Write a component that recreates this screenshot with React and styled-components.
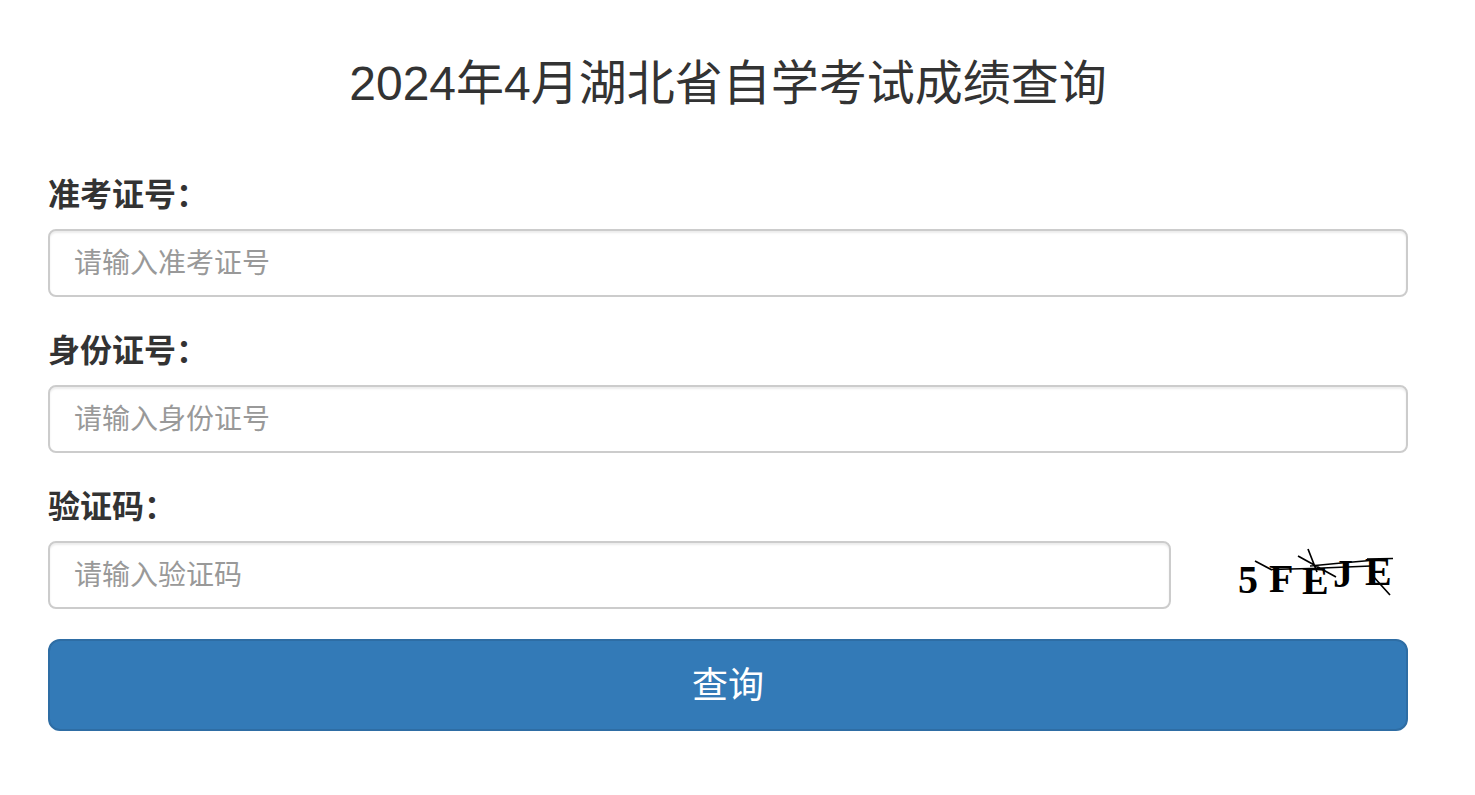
import React from "react";
import styled, { createGlobalStyle } from "styled-components";

const GlobalStyle = createGlobalStyle`
  *, *::before, *::after { box-sizing: border-box; }
  body {
    margin: 0;
    background: #fff;
    color: #333;
    font-family: "Liberation Sans", "Noto Sans CJK SC", sans-serif;
    font-size: 28px;
    line-height: 40px;
  }
`;

const Page = styled.main`
  padding: 50px 67px 64px 48px;
`;

const Title = styled.h1`
  margin: 0 0 53px;
  font-size: 48px;
  line-height: 68px;
  font-weight: 400;
  text-align: center;
`;

const Form = styled.form`
  display: flex;
  flex-direction: column;
  gap: 30px;
`;

const Field = styled.div`
  display: flex;
  flex-direction: column;
  gap: 10px;
`;

const Label = styled.label`
  font-size: 32px;
  line-height: 48px;
  font-weight: 700;
`;

const TextInput = styled.input`
  flex: 1;
  min-width: 0;
  height: 68px;
  padding: 13px 24px 11px;
  border: 2px solid #ccc;
  border-radius: 8px;
  background: #fff;
  box-shadow: inset 0 2px 2px rgba(0, 0, 0, 0.075);
  color: #555;
  font: inherit;
  outline: none;
  &::placeholder { color: #999; opacity: 1; }
`;

const InputRow = styled.div`
  display: flex;
  align-items: center;
`;

const Captcha = styled.svg`
  flex: none;
  width: 237px;
  height: 68px;
  font-family: "Liberation Serif", serif;
  font-size: 40px;
  font-weight: 700;
`;

const SubmitButton = styled.button`
  height: 92px;
  padding: 2px 24px 0;
  border: 2px solid #2e6da4;
  border-radius: 12px;
  background: #337ab7;
  color: #fff;
  font: inherit;
  font-size: 36px;
  cursor: pointer;
`;

export default function App() {
  return (
    <>
      <GlobalStyle />
      <Page>
        <Title>2024年4月湖北省自学考试成绩查询</Title>
        <Form onSubmit={(e) => e.preventDefault()}>
          <Field>
            <Label htmlFor="ticket">准考证号：</Label>
            <InputRow>
              <TextInput id="ticket" placeholder="请输入准考证号" />
            </InputRow>
          </Field>
          <Field>
            <Label htmlFor="identity">身份证号：</Label>
            <InputRow>
              <TextInput id="identity" placeholder="请输入身份证号" />
            </InputRow>
          </Field>
          <Field>
            <Label htmlFor="code">验证码：</Label>
            <InputRow>
              <TextInput id="code" placeholder="请输入验证码" />
              <Captcha viewBox="0 0 237 68" role="img" aria-label="验证码">
                <text x="67" y="52">5</text>
                <text x="98" y="51">F</text>
                <text x="131" y="53">E</text>
                <text x="162" y="46">J</text>
                <text x="194" y="44">E</text>
                <path d="M84 20L101 29M127 15L165 36M137 8L146 31M100 28.5L139 27.5L200 25M139 25L165 22.5L199 19.5M196 18L222 17.5M201 34L219 54" stroke="#000" strokeWidth="1.7" fill="none" />
              </Captcha>
            </InputRow>
          </Field>
          <SubmitButton type="submit">查询</SubmitButton>
        </Form>
      </Page>
    </>
  );
}
